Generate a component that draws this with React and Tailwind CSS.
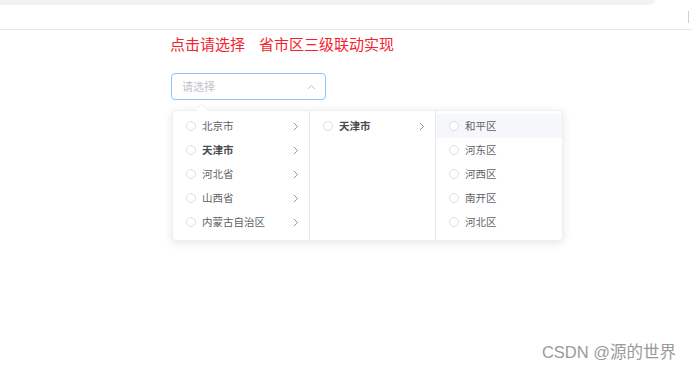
import React from "react";

const provinces = [
  { name: "北京市" },
  { name: "天津市", active: true },
  { name: "河北省" },
  { name: "山西省" },
  { name: "内蒙古自治区" },
  { name: "辽宁省" },
];
const districts = ["和平区", "河东区", "河西区", "南开区", "河北区", "红桥区"];

function Chevron() {
  return (
    <svg width="6" height="9" viewBox="0 0 6 9" className="shrink-0">
      <path d="M1 1l3.5 3.5L1 8" fill="none" stroke="#909399" strokeWidth="1" />
    </svg>
  );
}

function Radio() {
  return <span className="w-[10px] h-[10px] rounded-full border border-[#dcdfe6] bg-white shrink-0" />;
}

function Row({ label, bold, arrow, highlight }) {
  return (
    <div
      className={`h-[24px] flex items-center pl-[13px] pr-[10px] ${highlight ? "bg-[#f5f7fa]" : ""}`}
    >
      <Radio />
      <span
        className={`ml-[6px] flex-1 text-[10.5px] leading-none ${
          bold ? "font-bold text-[#4a4c50]" : "text-[#606266]"
        }`}
      >
        {label}
      </span>
      {arrow && <Chevron />}
    </div>
  );
}

export default function App() {
  return (
    <div
      className="w-[692px] h-[370px] bg-white relative overflow-hidden"
      style={{ fontFamily: '"Noto Sans CJK SC", "Noto Sans", sans-serif' }}
    >
      {/* browser chrome remnant */}
      <div className="h-[5px] w-[655px] bg-[#f1f2f4] rounded-br-[10px]" />
      <div className="h-[25px] border-b border-[#e6e6e6] flex justify-end items-center pr-[3px]">
        <div className="w-px h-[12px] bg-[#d0d0d0]" />
      </div>

      <div className="pl-[170px]">
        <div className="mt-[4px] text-[15px] leading-[20px] text-[#f5222d] flex gap-[14px]">
          <span>点击请选择</span>
          <span>省市区三级联动实现</span>
        </div>

        {/* input */}
        <div className="mt-[19px] ml-[1px] w-[155px] h-[27px] border border-[#8cc5ff] rounded-[4px] flex items-center pl-[10px] pr-[9px]">
          <span className="flex-1 text-[11px] text-[#c0c4cc]">请选择</span>
          <svg width="9" height="6" viewBox="0 0 9 6">
            <path d="M1 5l3.5-3.5L8 5" fill="none" stroke="#c0c4cc" strokeWidth="1" />
          </svg>
        </div>

        {/* dropdown */}
        <div className="relative mt-[10px] ml-[2px] w-[391px]">
          <div className="absolute left-[25px] -top-[5px] w-[9px] h-[9px] rotate-45 bg-white border-l border-t border-[#eef0f4]" />
          <div className="h-[131px] flex bg-white border border-[#eceef2] rounded-[4px] shadow-[0_2px_10px_rgba(0,0,0,0.1)] overflow-hidden">
            <div className="w-[137px] border-r border-[#e4e7ed] pt-[3px]">
              {provinces.map((p) => (
                <Row key={p.name} label={p.name} bold={p.active} arrow />
              ))}
            </div>
            <div className="w-[126px] border-r border-[#e4e7ed] pt-[3px]">
              <div className="h-[24px] flex items-center pl-[13px] pr-[10px]">
                <Radio />
                <span className="ml-[6px] flex-1 text-[10.5px] leading-none font-bold text-[#4a4c50]">天津市</span>
                <Chevron />
              </div>
            </div>
            <div className="flex-1 pt-[3px]">
              {districts.map((d, i) => (
                <Row key={d} label={d} highlight={i === 0} />
              ))}
            </div>
          </div>
        </div>
      </div>

      <div className="absolute right-[16px] bottom-[8px] text-[16.5px] leading-[20px] text-[#9a9a9a]">
        <span style={{ fontFamily: '"Liberation Sans", "Noto Sans CJK SC", sans-serif' }}>CSDN @</span>
        <span>源的世界</span>
      </div>
    </div>
  );
}
